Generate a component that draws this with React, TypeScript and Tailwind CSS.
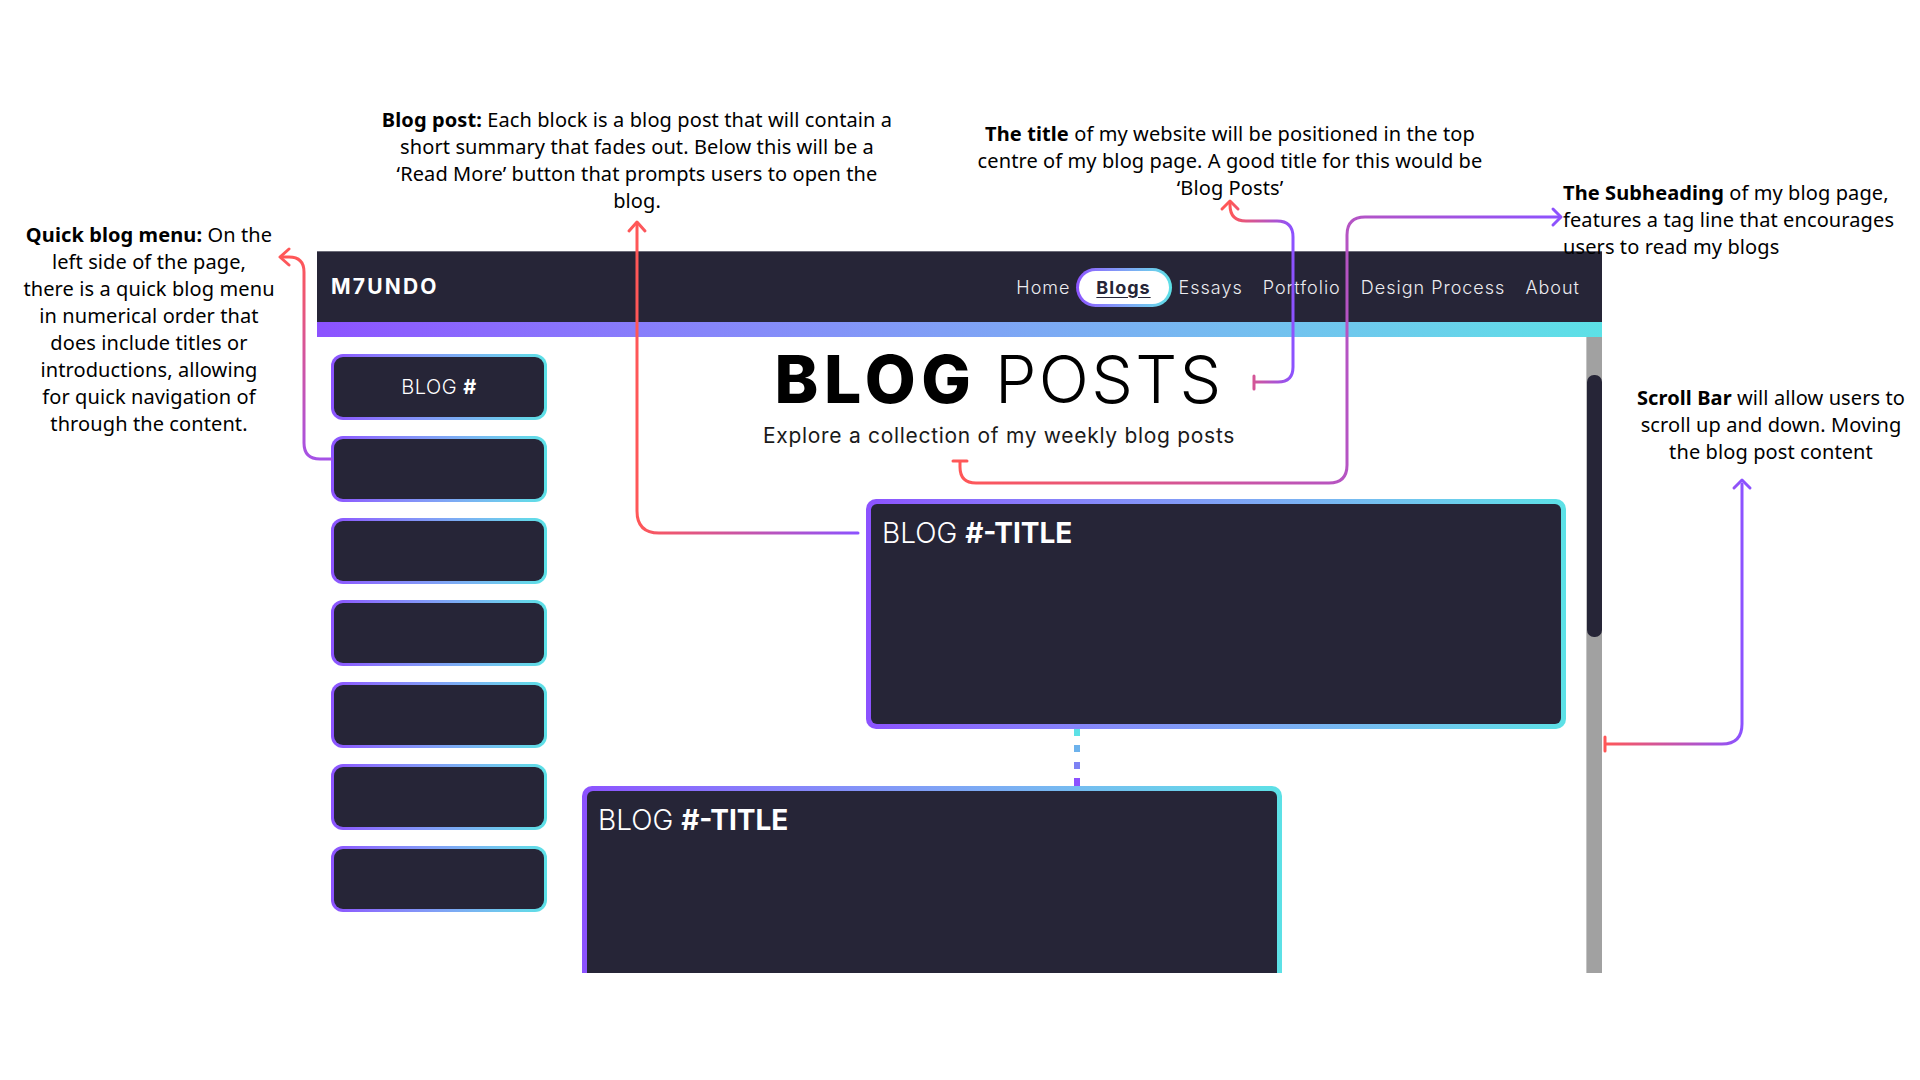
import React from 'react';

const navLinks = ['Home', 'Blogs', 'Essays', 'Portfolio', 'Design Process', 'About'];

const sideButtons = [0, 1, 2, 3, 4, 5, 6];

// 注釈テキスト
const Note: React.FC<{ className: string; children: React.ReactNode }> = ({ className, children }) => (
  <div
    className={`absolute whitespace-nowrap text-[20px] leading-[27px] tracking-[0.1px] text-black font-['Noto_Sans',sans-serif] ${className}`}
  >
    {children}
  </div>
);

const BlogCard: React.FC<{ className: string }> = ({ className }) => (
  <div className={`w-[700px] h-[230px] shrink-0 p-[5px] rounded-[10px] bg-linear-to-r from-[#8c52ff] to-[#5ce1e6] ${className}`}>
    <div className="h-full rounded-[6px] bg-[#262537] pl-[11px] pt-[15px]">
      <span className="text-[28px] leading-none text-white">
        <span className="font-light">BLOG </span>
        <span className="font-bold">#-TITLE</span>
      </span>
    </div>
  </div>
);

const App: React.FC = () => {
  return (
    <div className="relative w-[1920px] h-[1080px] bg-white overflow-hidden">
      {/* モックアップ */}
      <div className="pt-[251px] pl-[317px]">
        <div className="w-[1285px] h-[722px] flex flex-col overflow-hidden font-['Inter',sans-serif]">
          {/* ナビバー */}
          <header className="h-[71px] shrink-0 bg-[#262537] border-t border-[#6b6b78] flex items-center justify-between pl-[14px] pr-[22px]">
            <span className="text-white font-bold text-[21px] tracking-[2.2px]">M7UNDO</span>
            <nav className="flex items-center text-[18px] tracking-[1px] text-[#ececf0] font-light">
              {navLinks.map((link) =>
                link === 'Blogs' ? (
                  <div
                    key={link}
                    className="ml-[5px] mr-[7px] h-[39px] w-[96px] rounded-full p-[3px] bg-linear-to-r from-[#8c52ff] to-[#5ce1e6]"
                  >
                    <div className="h-full w-full rounded-full bg-white flex items-center justify-center">
                      <span className="font-bold text-[#262537] underline underline-offset-[3px]">Blogs</span>
                    </div>
                  </div>
                ) : (
                  <span key={link} className={link === 'Home' || link === 'Essays' ? '' : 'ml-[20px]'}>
                    {link}
                  </span>
                )
              )}
            </nav>
          </header>
          <div className="h-[15px] shrink-0 bg-linear-to-r from-[#8c52ff] to-[#5ce1e6]" />

          {/* 本文 */}
          <div className="flex-1 flex min-h-0">
            <div className="flex-1 flex overflow-hidden">
              {/* クイックブログメニュー */}
              <aside className="w-[230px] shrink-0 pl-[14px] pt-[17px] flex flex-col gap-[16px]">
                {sideButtons.map((i) => (
                  <div
                    key={i}
                    className="w-[216px] h-[66px] shrink-0 p-[3px] rounded-[12px] bg-linear-to-r from-[#8c52ff] to-[#5ce1e6]"
                  >
                    <div className="h-full rounded-[9px] bg-[#262537] flex items-center justify-center text-white text-[20px] tracking-[0.5px]">
                      {i === 0 && (
                        <span>
                          <span className="font-light">BLOG </span>
                          <span className="font-bold">#</span>
                        </span>
                      )}
                    </div>
                  </div>
                ))}
              </aside>

              <main className="flex-1 flex flex-col">
                <div className="ml-[152px] w-[600px] mt-[9px] text-center">
                  <h1 className="text-[66px] leading-none text-black whitespace-nowrap">
                    <span className="font-extrabold tracking-[5.5px]">BLOG</span>{' '}
                    <span className="font-light tracking-[2.3px]">POSTS</span>
                  </h1>
                  <p className="mt-[13px] text-[21px] leading-none tracking-[0.7px] text-[#1a1a1a] whitespace-nowrap">
                    Explore a collection of my weekly blog posts
                  </p>
                </div>

                <BlogCard className="ml-[319px] mt-[53px]" />

                <div className="ml-[527px] h-[57px] w-[6px] flex flex-col justify-between shrink-0">
                  <div className="h-[7px] bg-[#5ce1e6]" />
                  <div className="h-[7px] bg-[#6db2ec]" />
                  <div className="h-[7px] bg-[#7d82f4]" />
                  <div className="h-[8px] bg-[#8c52ff]" />
                </div>

                <BlogCard className="ml-[35px]" />
              </main>
            </div>

            {/* スクロールバー */}
            <div className="w-[16px] shrink-0 bg-[#a1a1a1] border-l border-[#c4c4c4] pt-[38px]">
              <div className="h-[262px] rounded-[7px] bg-[#262537]" />
            </div>
          </div>
        </div>
      </div>

      {/* 注釈 */}
      <Note className="left-[4px] top-[221px] w-[290px] text-center">
        <b>Quick blog menu:</b> On the
        <br />
        left side of the page,
        <br />
        there is a quick blog menu
        <br />
        in numerical order that
        <br />
        does include titles or
        <br />
        introductions, allowing
        <br />
        for quick navigation of
        <br />
        through the content.
      </Note>

      <Note className="left-[337px] top-[106px] w-[600px] text-center">
        <b>Blog post:</b> Each block is a blog post that will contain a
        <br />
        short summary that fades out. Below this will be a
        <br />
        ‘Read More’ button that prompts users to open the
        <br />
        blog.
      </Note>

      <Note className="left-[930px] top-[120px] w-[600px] text-center">
        <b>The title</b> of my website will be positioned in the top
        <br />
        centre of my blog page. A good title for this would be
        <br />
        ‘Blog Posts’
      </Note>

      <Note className="left-[1563px] top-[179px] text-left">
        <b>The Subheading</b> of my blog page,
        <br />
        features a tag line that encourages
        <br />
        users to read my blogs
      </Note>

      <Note className="left-[1621px] top-[384px] w-[300px] text-center">
        <b>Scroll Bar</b> will allow users to
        <br />
        scroll up and down. Moving
        <br />
        the blog post content
      </Note>

      {/* 矢印 */}
      <svg className="absolute inset-0 pointer-events-none" width="1920" height="1080" viewBox="0 0 1920 1080" fill="none">
        <defs>
          <linearGradient id="g1" gradientUnits="userSpaceOnUse" x1="0" y1="459" x2="0" y2="257">
            <stop offset="0" stopColor="#a552e6" />
            <stop offset="1" stopColor="#ff5757" />
          </linearGradient>
          <linearGradient id="g2" gradientUnits="userSpaceOnUse" x1="637" y1="0" x2="858" y2="0">
            <stop offset="0" stopColor="#ff5757" />
            <stop offset="1" stopColor="#8c52ff" />
          </linearGradient>
          <linearGradient id="g3" gradientUnits="userSpaceOnUse" x1="1230" y1="0" x2="1293" y2="0">
            <stop offset="0" stopColor="#ff5757" />
            <stop offset="1" stopColor="#8c52ff" />
          </linearGradient>
          <linearGradient id="g4" gradientUnits="userSpaceOnUse" x1="960" y1="0" x2="1562" y2="0">
            <stop offset="0" stopColor="#ff5757" />
            <stop offset="1" stopColor="#8c52ff" />
          </linearGradient>
          <linearGradient id="g5" gradientUnits="userSpaceOnUse" x1="1605" y1="0" x2="1742" y2="0">
            <stop offset="0" stopColor="#ff5757" />
            <stop offset="1" stopColor="#8c52ff" />
          </linearGradient>
        </defs>

        <g strokeWidth="3" strokeLinecap="round" strokeLinejoin="round">
          {/* quick blog menu */}
          <path stroke="url(#g1)" d="M331 459 H320 Q304 459 304 443 V272 Q304 257 289 257 H281" />
          <path stroke="url(#g1)" d="M289 249 L280 257 L289 265" />

          {/* blog post */}
          <path stroke="url(#g2)" d="M858 533 H659 Q637 533 637 511 V224" />
          <path stroke="url(#g2)" d="M629 231 L637 222 L645 231" />

          {/* title */}
          <path stroke="url(#g3)" d="M1254 376 V389 M1254 382 H1278 Q1293 382 1293 367 V237 Q1293 221 1277 221 H1246 Q1230 221 1230 205 V203" />
          <path stroke="url(#g3)" d="M1222 209 L1230 201 L1238 209" />

          {/* subheading */}
          <path stroke="url(#g4)" d="M953 461 H967 M960 461 V467 Q960 483 976 483 H1329 Q1347 483 1347 465 V235 Q1347 217 1365 217 H1558" />
          <path stroke="url(#g4)" d="M1553 209 L1561 217 L1553 225" />

          {/* scroll bar */}
          <path stroke="url(#g5)" d="M1605 737 V751 M1605 744 H1722 Q1742 744 1742 724 V484" />
          <path stroke="url(#g5)" d="M1734 488 L1742 480 L1750 488" />
        </g>
      </svg>
    </div>
  );
};

export default App;
